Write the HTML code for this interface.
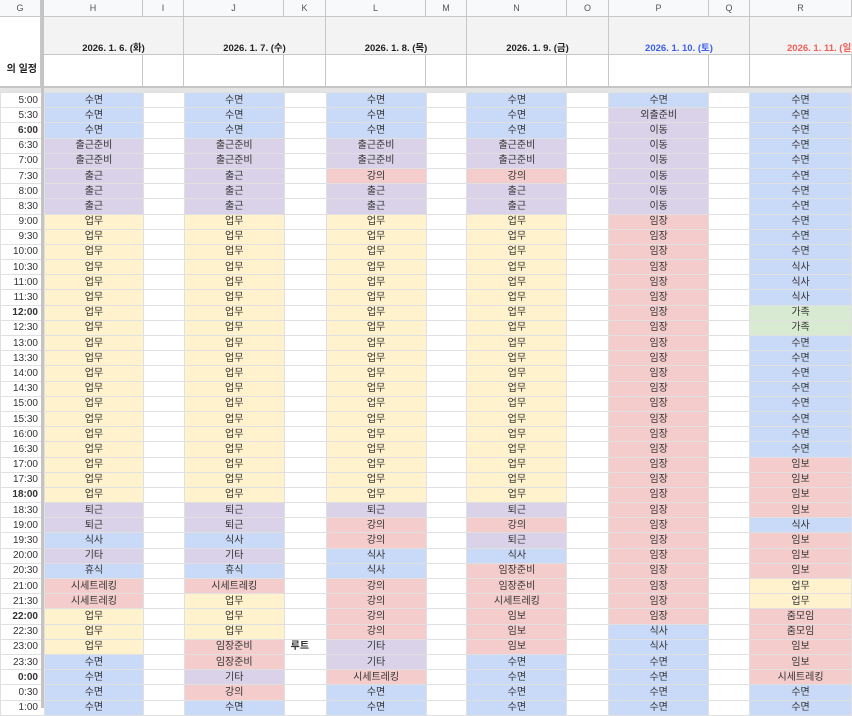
<!DOCTYPE html>
<html><head><meta charset="utf-8"><style>
*{margin:0;padding:0;box-sizing:border-box}
body{width:852px;height:708px;overflow:hidden;background:#fff;font-family:"Liberation Sans","Noto Sans CJK KR",sans-serif;font-size:10px;color:#333;position:relative}
.hd{position:absolute;top:0;height:17px;background:#f8f9fa;border-right:1px solid #c7c7c7;border-bottom:1px solid #c7c7c7;text-align:center;line-height:17px;color:#555;font-size:9px}
.r2{position:absolute;top:17px;height:38px;background:#f3f3f3;border-right:1px solid #c7c7c7;border-bottom:1px solid #c7c7c7;text-align:center;padding-top:23px;font-weight:bold;font-size:9.5px;color:#222}
.r3{position:absolute;top:55px;height:32px;background:#fff;border-right:1px solid #c7c7c7;border-bottom:1px solid #c7c7c7}
table{position:absolute;top:92px;left:0;border-collapse:collapse;table-layout:fixed}
td{height:15.2px;border:1px solid #e0e0e0;text-align:center;font-size:10px;line-height:13px;white-space:nowrap;overflow:hidden;padding:0}
td.t{text-align:right;padding-right:6px;border-right:none;color:#333}
td.t.bo{font-weight:bold}
.b{background:#c9daf8}.p{background:#d9d2e9}.y{background:#fff2cc}.r{background:#f4cccc}.g{background:#d9ead3}
.vd{position:absolute;left:41px;top:0;width:3px;height:708px;background:#c4c4c4}
.hdv{position:absolute;left:0;top:87px;width:852px;height:5px;background:#e4e4e4;border-top:1px solid #c4c4c4}
</style></head><body>
<div class="hd" style="left:0;width:41px">G</div>
<div class="hd" style="left:44px;width:99px">H</div>
<div class="hd" style="left:143px;width:41px">I</div>
<div class="hd" style="left:184px;width:100px">J</div>
<div class="hd" style="left:284px;width:42px">K</div>
<div class="hd" style="left:326px;width:100px">L</div>
<div class="hd" style="left:426px;width:41px">M</div>
<div class="hd" style="left:467px;width:100px">N</div>
<div class="hd" style="left:567px;width:42px">O</div>
<div class="hd" style="left:609px;width:100px">P</div>
<div class="hd" style="left:709px;width:41px">Q</div>
<div class="hd" style="left:750px;width:102px">R</div>

<div class="r3" style="left:0;width:41px;top:17px;height:38px;border-bottom:none"></div>
<div class="r2" style="left:44px;width:140px">2026. 1. 6. (화)</div>
<div class="r2" style="left:184px;width:142px">2026. 1. 7. (수)</div>
<div class="r2" style="left:326px;width:141px">2026. 1. 8. (목)</div>
<div class="r2" style="left:467px;width:142px">2026. 1. 9. (금)</div>
<div class="r2" style="left:609px;width:141px;color:#3c5ee8">2026. 1. 10. (토)</div>
<div class="r2" style="left:750px;width:140px;color:#f0605a;text-align:left;padding-left:37px">2026. 1. 11. (일)</div>

<div class="r3" style="left:0;width:41px;font-weight:bold;font-size:10px;text-align:right;padding-right:3px;line-height:30px;color:#222">의 일정</div>
<div class="r3" style="left:44px;width:99px"></div><div class="r3" style="left:143px;width:41px"></div>
<div class="r3" style="left:184px;width:100px"></div><div class="r3" style="left:284px;width:42px"></div>
<div class="r3" style="left:326px;width:100px"></div><div class="r3" style="left:426px;width:41px"></div>
<div class="r3" style="left:467px;width:100px"></div><div class="r3" style="left:567px;width:42px"></div>
<div class="r3" style="left:609px;width:100px"></div><div class="r3" style="left:709px;width:41px"></div>
<div class="r3" style="left:750px;width:102px"></div>

<table>
<colgroup><col style="width:44px"><col style="width:99px"><col style="width:41px"><col style="width:100px"><col style="width:42px"><col style="width:100px"><col style="width:41px"><col style="width:100px"><col style="width:42px"><col style="width:100px"><col style="width:41px"><col style="width:102px"></colgroup>
<tr><td class="t">5:00</td><td class="b">수면</td><td></td><td class="b">수면</td><td></td><td class="b">수면</td><td></td><td class="b">수면</td><td></td><td class="b">수면</td><td></td><td class="b">수면</td></tr>
<tr><td class="t">5:30</td><td class="b">수면</td><td></td><td class="b">수면</td><td></td><td class="b">수면</td><td></td><td class="b">수면</td><td></td><td class="p">외출준비</td><td></td><td class="b">수면</td></tr>
<tr><td class="t bo">6:00</td><td class="b">수면</td><td></td><td class="b">수면</td><td></td><td class="b">수면</td><td></td><td class="b">수면</td><td></td><td class="p">이동</td><td></td><td class="b">수면</td></tr>
<tr><td class="t">6:30</td><td class="p">출근준비</td><td></td><td class="p">출근준비</td><td></td><td class="p">출근준비</td><td></td><td class="p">출근준비</td><td></td><td class="p">이동</td><td></td><td class="b">수면</td></tr>
<tr><td class="t">7:00</td><td class="p">출근준비</td><td></td><td class="p">출근준비</td><td></td><td class="p">출근준비</td><td></td><td class="p">출근준비</td><td></td><td class="p">이동</td><td></td><td class="b">수면</td></tr>
<tr><td class="t">7:30</td><td class="p">출근</td><td></td><td class="p">출근</td><td></td><td class="r">강의</td><td></td><td class="r">강의</td><td></td><td class="p">이동</td><td></td><td class="b">수면</td></tr>
<tr><td class="t">8:00</td><td class="p">출근</td><td></td><td class="p">출근</td><td></td><td class="p">출근</td><td></td><td class="p">출근</td><td></td><td class="p">이동</td><td></td><td class="b">수면</td></tr>
<tr><td class="t">8:30</td><td class="p">출근</td><td></td><td class="p">출근</td><td></td><td class="p">출근</td><td></td><td class="p">출근</td><td></td><td class="p">이동</td><td></td><td class="b">수면</td></tr>
<tr><td class="t">9:00</td><td class="y">업무</td><td></td><td class="y">업무</td><td></td><td class="y">업무</td><td></td><td class="y">업무</td><td></td><td class="r">임장</td><td></td><td class="b">수면</td></tr>
<tr><td class="t">9:30</td><td class="y">업무</td><td></td><td class="y">업무</td><td></td><td class="y">업무</td><td></td><td class="y">업무</td><td></td><td class="r">임장</td><td></td><td class="b">수면</td></tr>
<tr><td class="t">10:00</td><td class="y">업무</td><td></td><td class="y">업무</td><td></td><td class="y">업무</td><td></td><td class="y">업무</td><td></td><td class="r">임장</td><td></td><td class="b">수면</td></tr>
<tr><td class="t">10:30</td><td class="y">업무</td><td></td><td class="y">업무</td><td></td><td class="y">업무</td><td></td><td class="y">업무</td><td></td><td class="r">임장</td><td></td><td class="b">식사</td></tr>
<tr><td class="t">11:00</td><td class="y">업무</td><td></td><td class="y">업무</td><td></td><td class="y">업무</td><td></td><td class="y">업무</td><td></td><td class="r">임장</td><td></td><td class="b">식사</td></tr>
<tr><td class="t">11:30</td><td class="y">업무</td><td></td><td class="y">업무</td><td></td><td class="y">업무</td><td></td><td class="y">업무</td><td></td><td class="r">임장</td><td></td><td class="b">식사</td></tr>
<tr><td class="t bo">12:00</td><td class="y">업무</td><td></td><td class="y">업무</td><td></td><td class="y">업무</td><td></td><td class="y">업무</td><td></td><td class="r">임장</td><td></td><td class="g">가족</td></tr>
<tr><td class="t">12:30</td><td class="y">업무</td><td></td><td class="y">업무</td><td></td><td class="y">업무</td><td></td><td class="y">업무</td><td></td><td class="r">임장</td><td></td><td class="g">가족</td></tr>
<tr><td class="t">13:00</td><td class="y">업무</td><td></td><td class="y">업무</td><td></td><td class="y">업무</td><td></td><td class="y">업무</td><td></td><td class="r">임장</td><td></td><td class="b">수면</td></tr>
<tr><td class="t">13:30</td><td class="y">업무</td><td></td><td class="y">업무</td><td></td><td class="y">업무</td><td></td><td class="y">업무</td><td></td><td class="r">임장</td><td></td><td class="b">수면</td></tr>
<tr><td class="t">14:00</td><td class="y">업무</td><td></td><td class="y">업무</td><td></td><td class="y">업무</td><td></td><td class="y">업무</td><td></td><td class="r">임장</td><td></td><td class="b">수면</td></tr>
<tr><td class="t">14:30</td><td class="y">업무</td><td></td><td class="y">업무</td><td></td><td class="y">업무</td><td></td><td class="y">업무</td><td></td><td class="r">임장</td><td></td><td class="b">수면</td></tr>
<tr><td class="t">15:00</td><td class="y">업무</td><td></td><td class="y">업무</td><td></td><td class="y">업무</td><td></td><td class="y">업무</td><td></td><td class="r">임장</td><td></td><td class="b">수면</td></tr>
<tr><td class="t">15:30</td><td class="y">업무</td><td></td><td class="y">업무</td><td></td><td class="y">업무</td><td></td><td class="y">업무</td><td></td><td class="r">임장</td><td></td><td class="b">수면</td></tr>
<tr><td class="t">16:00</td><td class="y">업무</td><td></td><td class="y">업무</td><td></td><td class="y">업무</td><td></td><td class="y">업무</td><td></td><td class="r">임장</td><td></td><td class="b">수면</td></tr>
<tr><td class="t">16:30</td><td class="y">업무</td><td></td><td class="y">업무</td><td></td><td class="y">업무</td><td></td><td class="y">업무</td><td></td><td class="r">임장</td><td></td><td class="b">수면</td></tr>
<tr><td class="t">17:00</td><td class="y">업무</td><td></td><td class="y">업무</td><td></td><td class="y">업무</td><td></td><td class="y">업무</td><td></td><td class="r">임장</td><td></td><td class="r">임보</td></tr>
<tr><td class="t">17:30</td><td class="y">업무</td><td></td><td class="y">업무</td><td></td><td class="y">업무</td><td></td><td class="y">업무</td><td></td><td class="r">임장</td><td></td><td class="r">임보</td></tr>
<tr><td class="t bo">18:00</td><td class="y">업무</td><td></td><td class="y">업무</td><td></td><td class="y">업무</td><td></td><td class="y">업무</td><td></td><td class="r">임장</td><td></td><td class="r">임보</td></tr>
<tr><td class="t">18:30</td><td class="p">퇴근</td><td></td><td class="p">퇴근</td><td></td><td class="p">퇴근</td><td></td><td class="p">퇴근</td><td></td><td class="r">임장</td><td></td><td class="r">임보</td></tr>
<tr><td class="t">19:00</td><td class="p">퇴근</td><td></td><td class="p">퇴근</td><td></td><td class="r">강의</td><td></td><td class="r">강의</td><td></td><td class="r">임장</td><td></td><td class="b">식사</td></tr>
<tr><td class="t">19:30</td><td class="b">식사</td><td></td><td class="b">식사</td><td></td><td class="r">강의</td><td></td><td class="p">퇴근</td><td></td><td class="r">임장</td><td></td><td class="r">임보</td></tr>
<tr><td class="t">20:00</td><td class="p">기타</td><td></td><td class="p">기타</td><td></td><td class="b">식사</td><td></td><td class="b">식사</td><td></td><td class="r">임장</td><td></td><td class="r">임보</td></tr>
<tr><td class="t">20:30</td><td class="b">휴식</td><td></td><td class="b">휴식</td><td></td><td class="b">식사</td><td></td><td class="r">임장준비</td><td></td><td class="r">임장</td><td></td><td class="r">임보</td></tr>
<tr><td class="t">21:00</td><td class="r">시세트레킹</td><td></td><td class="r">시세트레킹</td><td></td><td class="r">강의</td><td></td><td class="r">임장준비</td><td></td><td class="r">임장</td><td></td><td class="y">업무</td></tr>
<tr><td class="t">21:30</td><td class="r">시세트레킹</td><td></td><td class="y">업무</td><td></td><td class="r">강의</td><td></td><td class="r">시세트레킹</td><td></td><td class="r">임장</td><td></td><td class="y">업무</td></tr>
<tr><td class="t bo">22:00</td><td class="y">업무</td><td></td><td class="y">업무</td><td></td><td class="r">강의</td><td></td><td class="r">임보</td><td></td><td class="r">임장</td><td></td><td class="r">줌모임</td></tr>
<tr><td class="t">22:30</td><td class="y">업무</td><td></td><td class="y">업무</td><td></td><td class="r">강의</td><td></td><td class="r">임보</td><td></td><td class="b">식사</td><td></td><td class="r">줌모임</td></tr>
<tr><td class="t">23:00</td><td class="y">업무</td><td></td><td class="r">임장준비</td><td style="font-weight:bold;text-align:left;padding-left:6px">루트</td><td class="p">기타</td><td></td><td class="r">임보</td><td></td><td class="b">식사</td><td></td><td class="r">임보</td></tr>
<tr><td class="t">23:30</td><td class="b">수면</td><td></td><td class="r">임장준비</td><td></td><td class="p">기타</td><td></td><td class="b">수면</td><td></td><td class="b">수면</td><td></td><td class="r">임보</td></tr>
<tr><td class="t bo">0:00</td><td class="b">수면</td><td></td><td class="p">기타</td><td></td><td class="r">시세트레킹</td><td></td><td class="b">수면</td><td></td><td class="b">수면</td><td></td><td class="r">시세트레킹</td></tr>
<tr><td class="t">0:30</td><td class="b">수면</td><td></td><td class="r">강의</td><td></td><td class="b">수면</td><td></td><td class="b">수면</td><td></td><td class="b">수면</td><td></td><td class="b">수면</td></tr>
<tr><td class="t">1:00</td><td class="b">수면</td><td></td><td class="b">수면</td><td></td><td class="b">수면</td><td></td><td class="b">수면</td><td></td><td class="b">수면</td><td></td><td class="b">수면</td></tr>
</table>
<div class="hdv"></div>
<div class="vd"></div>
</body></html>
